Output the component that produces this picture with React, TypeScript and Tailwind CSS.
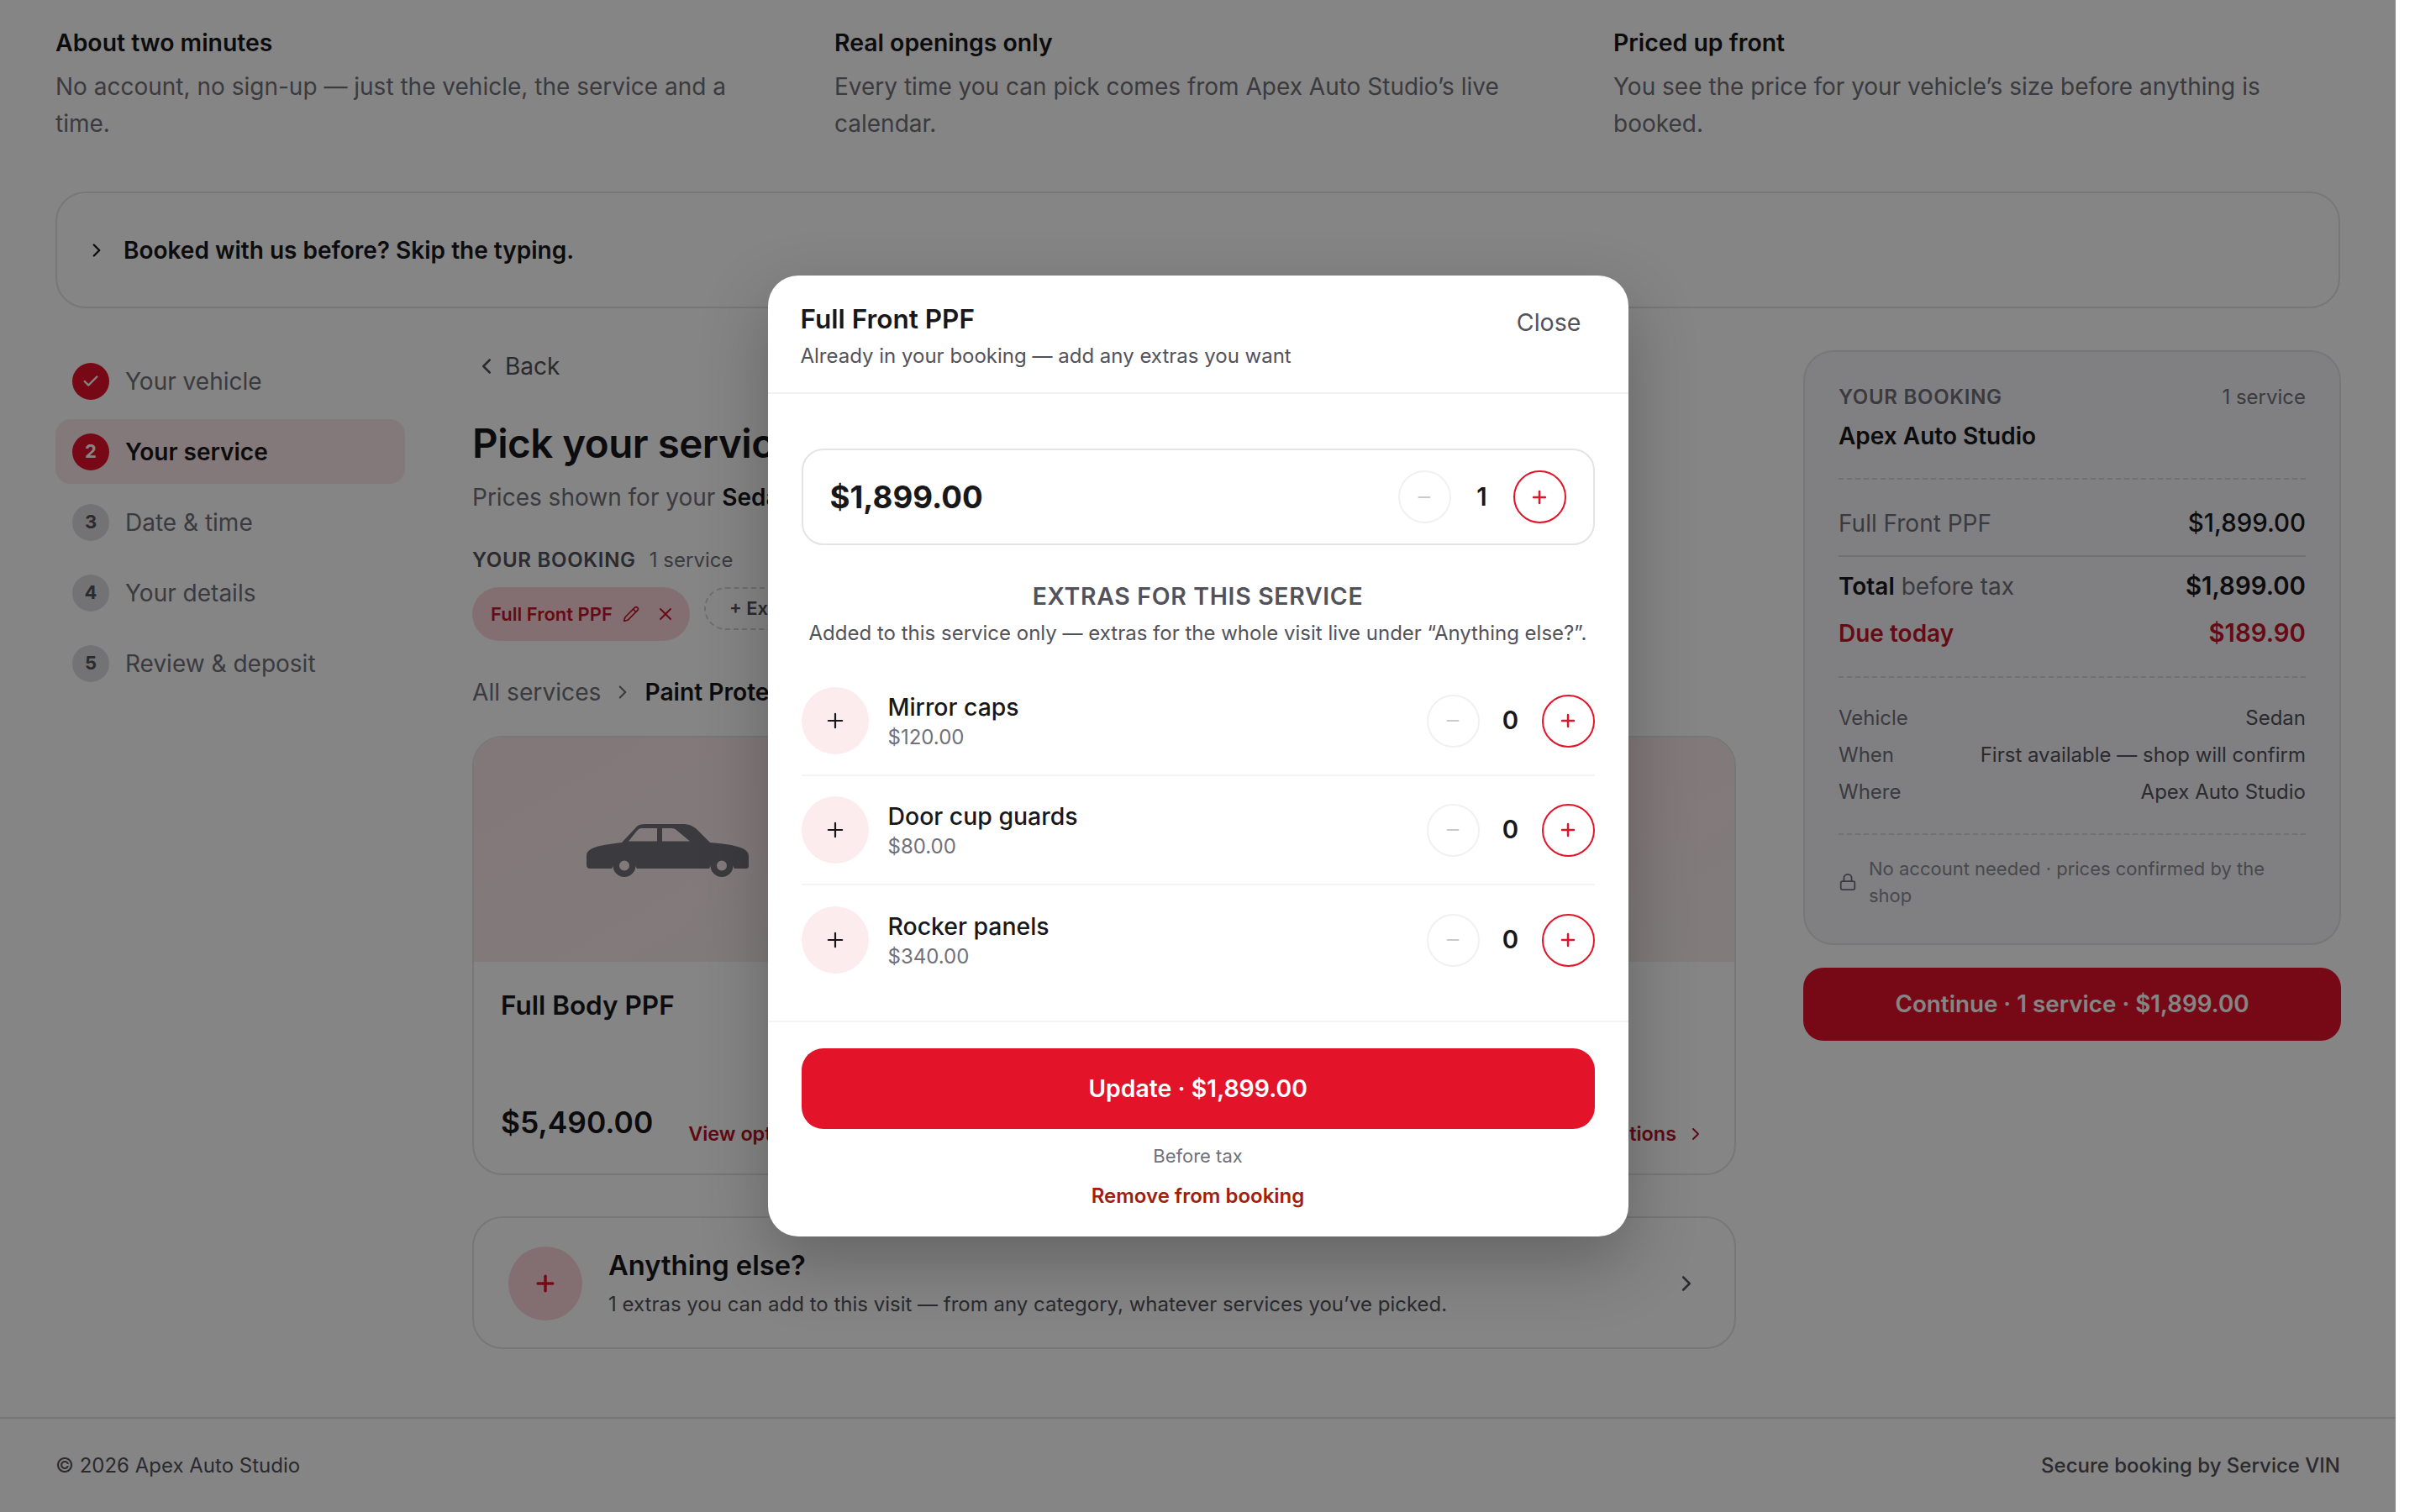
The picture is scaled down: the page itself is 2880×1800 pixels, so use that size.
import { Check, ChevronLeft, ChevronRight, Lock, Minus, Pencil, Plus, X } from 'lucide-react';

const intro = [
  {
    title: 'About two minutes',
    body: 'No account, no sign-up — just the vehicle, the service and a time.',
  },
  {
    title: 'Real openings only',
    body: 'Every time you can pick comes from Apex Auto Studio’s live calendar.',
  },
  {
    title: 'Priced up front',
    body: 'You see the price for your vehicle’s size before anything is booked.',
  },
];

const steps = ['Date & time', 'Your details', 'Review & deposit'];

const cards = [
  { name: 'Full Body PPF', price: '$5,490.00' },
  { name: 'Full Front PPF', price: '$1,899.00' },
  { name: 'Track Pack PPF', price: '$2,750.00' },
];

const extras = [
  { name: 'Mirror caps', price: '$120.00' },
  { name: 'Door cup guards', price: '$80.00' },
  { name: 'Rocker panels', price: '$340.00' },
];

const CarIcon = () => (
  <svg viewBox="0 0 193 64" className="h-[64px] w-[193px] fill-[#71717a]">
    <path
      fillRule="evenodd"
      d="M4 54 C1 54 0 52 0 50 L0 38 C0 32 8 29 16 27 C24 25 34 24 42 23 L58 6 C61 2 65 1 70 1 L114 1 C122 1 126 3 131 7 L147 23 C158 24 170 25 180 28 C188 30 193 34 193 39 L193 51 C193 53 192 54 190 54 L176 54 A16 16 0 0 0 146 54 L60 54 A16 16 0 0 0 30 54 Z M50 21.5 L84 21.5 L84 6 L66 6 C63 6 62 7 60 9 Z M90 21.5 L123 21.5 L108 9 C106 7 104 6 101 6 L90 6 Z"
    />
    <path
      fillRule="evenodd"
      d="M45 37 A13.5 13.5 0 1 0 45 64 A13.5 13.5 0 1 0 45 37 Z M45 44.5 A6 6 0 1 1 45 56.5 A6 6 0 1 1 45 44.5 Z M161 37 A13.5 13.5 0 1 0 161 64 A13.5 13.5 0 1 0 161 37 Z M161 44.5 A6 6 0 1 1 161 56.5 A6 6 0 1 1 161 44.5 Z"
    />
  </svg>
);

const Stepper = ({ value }: { value: number }) => (
  <div className="flex items-center">
    <div className="flex h-[63px] w-[63px] items-center justify-center rounded-full border-2 border-[#f1f1f3] text-[#c9c9ce]">
      <Minus size={22} strokeWidth={2.4} />
    </div>
    <div className="w-[74px] text-center text-[29.4px] font-semibold leading-none text-[#18181b]">{value}</div>
    <div className="flex h-[63px] w-[63px] items-center justify-center rounded-full border-2 border-[#e31329] text-[#e31329]">
      <Plus size={24} strokeWidth={2.4} />
    </div>
  </div>
);

const ServiceCard = ({ name, price }: { name: string; price: string }) => (
  <div className="flex h-[523px] flex-col overflow-hidden rounded-[36px] border-2 border-[#e4e4e7]">
    <div className="flex h-[267px] items-center justify-center bg-linear-to-br from-[#fce6e8] to-[#f7eced] pr-[10px]">
      <CarIcon />
    </div>
    <div className="flex flex-1 flex-col pr-[34px] pl-[32px]">
      <div className="mt-[30px] text-[31.5px] font-semibold leading-[44px] text-[#18181b]">{name}</div>
      <div className="mt-auto mb-[27px] flex items-start justify-between">
        <div className="text-[35.4px] font-semibold leading-[48px] text-[#18181b]">{price}</div>
        <div className="flex items-center gap-[11px] pt-[17px] text-[23.4px] font-semibold leading-[40px] text-[#b81324]">
          View options
          <ChevronRight size={24} />
        </div>
      </div>
    </div>
  </div>
);

const BookingPanel = () => (
  <div className="mt-[1px] w-[640px] shrink-0">
    <div className="rounded-[36px] border-2 border-[#e4e4e7] bg-[#f5f6f9] px-[40px] pt-[36px] pb-[41px]">
      <div className="flex items-center justify-between text-[24px] leading-[36px] text-[#71717a]">
        <span className="font-semibold tracking-[0.7px]">YOUR BOOKING</span>
        <span>1 service</span>
      </div>
      <div className="mt-[6px] text-[28px] font-semibold leading-[44px] text-[#18181b]">Apex Auto Studio</div>
      <div className="mt-[28px] border-t-2 border-dashed border-[#d9d9de]" />
      <div className="mt-[30px] flex items-center justify-between text-[28px] leading-[44px]">
        <span className="text-[#71717a]">Full Front PPF</span>
        <span className="text-[29.4px] font-medium text-[#18181b]">$1,899.00</span>
      </div>
      <div className="mt-[16px] border-t-2 border-[#d9d9de]" />
      <div className="mt-[13px] flex items-center justify-between text-[28px] leading-[44px]">
        <span className="text-[#71717a]">
          <b className="font-semibold text-[#18181b]">Total</b> before tax
        </span>
        <span className="text-[29.4px] font-semibold text-[#18181b]">$1,899.00</span>
      </div>
      <div className="mt-[12px] flex items-center justify-between text-[28px] font-semibold leading-[44px] text-[#c4142a]">
        <span>Due today</span>
        <span className="text-[29.4px]">$189.90</span>
      </div>
      <div className="mt-[29px] border-t-2 border-dashed border-[#d9d9de]" />
      <div className="mt-[28px] flex flex-col gap-[4px] text-[24px] leading-[40px]">
        <div className="flex justify-between">
          <span className="text-[#71717a]">Vehicle</span>
          <span className="text-[#52525b]">Sedan</span>
        </div>
        <div className="flex justify-between">
          <span className="text-[#71717a]">When</span>
          <span className="text-[#52525b]">First available — shop will confirm</span>
        </div>
        <div className="flex justify-between">
          <span className="text-[#71717a]">Where</span>
          <span className="text-[#52525b]">Apex Auto Studio</span>
        </div>
      </div>
      <div className="mt-[29px] border-t-2 border-dashed border-[#d9d9de]" />
      <div className="mt-[24px] flex items-center gap-[14px] pr-[40px] text-[22px] leading-[32px] text-[#8b8b94]">
        <Lock size={22} className="shrink-0 text-[#71717a]" />
        <span>No account needed · prices confirmed by the shop</span>
      </div>
    </div>
    <div className="mt-[27px] flex h-[87px] items-center justify-center rounded-[24px] bg-[#e31329] text-[27.8px] font-semibold text-white">
      Continue · 1 service · $1,899.00
    </div>
  </div>
);

const ExtrasModal = () => (
  <div className="absolute top-0 left-0 flex h-[1800px] w-[2851px] items-center justify-center bg-black/48">
    <div className="flex h-[1144px] w-[1024px] flex-col rounded-[36px] bg-white shadow-[0_30px_80px_rgba(0,0,0,0.25)]">
      <div className="flex h-[141px] shrink-0 justify-between border-b-2 border-[#f1f1f3] pt-[32px] pr-[56px] pl-[39px]">
        <div>
          <div className="text-[31.5px] font-semibold leading-[40px] text-[#18181b]">Full Front PPF</div>
          <div className="mt-[6px] text-[24px] leading-[36px] text-[#52525b]">
            Already in your booking — add any extras you want
          </div>
        </div>
        <div className="pt-[4px] text-[28.6px] leading-[40px] text-[#52525b]">Close</div>
      </div>
      <div className="flex-1 px-[40px] pt-[65px]">
        <div className="flex h-[115px] items-center justify-between rounded-[26px] border-2 border-[#e4e4e7] pr-[32px] pl-[32px]">
          <div className="text-[36.7px] font-bold text-[#18181b]">$1,899.00</div>
          <Stepper value={1} />
        </div>
        <div className="mt-[41px] text-center text-[28.4px] font-semibold leading-[40px] tracking-[0.7px] text-[#52525b]">
          EXTRAS FOR THIS SERVICE
        </div>
        <div className="mt-[6px] text-center text-[24px] leading-[36px] whitespace-nowrap text-[#52525b]">
          Added to this service only — extras for the whole visit live under “Anything else?”.
        </div>
        <div className="mt-[22px]">
          {extras.map((extra, index) => (
            <div
              key={extra.name}
              className={`flex h-[130px] items-center justify-between ${index < extras.length - 1 ? 'border-b-2 border-[#f4f4f5]' : ''}`}
            >
              <div className="flex items-center gap-[23px]">
                <div className="flex h-[80px] w-[80px] items-center justify-center rounded-full bg-[#fdecee] text-[#18181b]">
                  <Plus size={28} strokeWidth={1.9} />
                </div>
                <div>
                  <div className="text-[28.4px] font-medium leading-[40px] text-[#18181b]">{extra.name}</div>
                  <div className="text-[24px] leading-[32px] text-[#71717a]">{extra.price}</div>
                </div>
              </div>
              <Stepper value={0} />
            </div>
          ))}
        </div>
      </div>
      <div className="h-[257px] shrink-0 border-t-2 border-[#f4f4f5] px-[40px] pt-[31px] text-center">
        <div className="flex h-[96px] items-center justify-center rounded-[26px] bg-[#e31329] text-[28.4px] font-semibold text-white">
          Update · $1,899.00
        </div>
        <div className="mt-[14px] text-[22px] leading-[36px] text-[#71717a]">Before tax</div>
        <div className="mt-[12px] text-[24px] font-semibold leading-[36px] text-[#a11d0c]">Remove from booking</div>
      </div>
    </div>
  </div>
);

export default function App() {
  return (
    <div className="relative h-[1800px] w-[2880px] overflow-hidden bg-white font-[Inter,sans-serif]">
      <div className="flex h-full w-[2851px] flex-col">
        <div className="px-[66px] pt-[29px]">
          <div className="grid grid-cols-3 gap-[62px]">
            {intro.map((item) => (
              <div key={item.title}>
                <div className="text-[28.4px] font-semibold leading-[44px] text-[#18181b]">{item.title}</div>
                <div className="mt-[8px] text-[28px] leading-[44px] text-[#71717a]">{item.body}</div>
              </div>
            ))}
          </div>
          <div className="mt-[59px] flex h-[139px] items-center gap-[19px] rounded-[36px] border-2 border-[#e4e4e7] pl-[34px]">
            <ChevronRight size={26} strokeWidth={2.2} className="text-[#18181b]" />
            <span className="text-[28px] font-semibold text-[#18181b]">Booked with us before? Skip the typing.</span>
          </div>
          <div className="mt-[49px] flex gap-[80px]">
            <div className="-mt-[1px] flex w-[416px] shrink-0 flex-col gap-[7px] text-[28px]">
              <div className="flex h-[77px] items-center gap-[19px] px-[20px] text-[#71717a]">
                <div className="flex h-[44px] w-[44px] items-center justify-center rounded-full bg-[#e31329] text-white">
                  <Check size={22} strokeWidth={2.5} />
                </div>
                Your vehicle
              </div>
              <div className="flex h-[77px] items-center gap-[19px] rounded-[18px] bg-[#fde8ea] px-[20px] font-semibold text-[#18181b]">
                <div className="flex h-[44px] w-[44px] items-center justify-center rounded-full bg-[#e31329] text-[22px] font-bold text-white">
                  2
                </div>
                Your service
              </div>
              {steps.map((step, index) => (
                <div key={step} className="flex h-[77px] items-center gap-[19px] px-[20px] text-[#71717a]">
                  <div className="flex h-[44px] w-[44px] items-center justify-center rounded-full bg-[#dcdce0] text-[22px] font-bold text-[#52525b]">
                    {index + 3}
                  </div>
                  {step}
                </div>
              ))}
            </div>
            <div className="w-[1504px] shrink-0">
              <div className="flex h-[40px] items-center gap-[7px] pl-[2px] text-[28px] text-[#52525b]">
                <ChevronLeft size={30} />
                Back
              </div>
              <div className="mt-[40px] text-[47.5px] font-semibold leading-[64px] tracking-[-0.5px] text-[#18181b]">
                Pick your service
              </div>
              <div className="mt-[10px] text-[28px] leading-[44px] text-[#71717a]">
                Prices shown for your <b className="font-semibold text-[#18181b]">Sedan</b>
              </div>
              <div className="mt-[33px] flex h-[40px] items-center gap-[16px] text-[24px]">
                <span className="font-semibold tracking-[0.7px] text-[#52525b]">YOUR BOOKING</span>
                <span className="text-[#71717a]">1 service</span>
              </div>
              <div className="mt-[12px] flex h-[65px] items-start gap-[17px]">
                <div className="flex h-[64px] items-center gap-[12px] rounded-full bg-[#fbd5d9] pr-[17px] pl-[22px] text-[22px] font-semibold text-[#c4142a]">
                  Full Front PPF
                  <Pencil size={20} />
                  <X size={24} className="ml-[7px]" />
                </div>
                <div className="flex h-[51px] items-center gap-[8px] rounded-full border-2 border-dashed border-[#d4d4d8] px-[28px] text-[22px] font-semibold text-[#52525b]">
                  + Extras
                </div>
              </div>
              <div className="mt-[38px] flex h-[44px] items-center gap-[13px] text-[28.2px]">
                <span className="text-[#71717a]">All services</span>
                <ChevronRight size={26} className="text-[#71717a]" />
                <span className="font-semibold text-[#18181b]">Paint Protection</span>
              </div>
              <div className="mt-[30px] grid grid-cols-3 gap-[39.5px]">
                {cards.map((card) => (
                  <ServiceCard key={card.name} {...card} />
                ))}
              </div>
              <div className="mt-[49px] flex h-[158px] items-center rounded-[36px] border-2 border-[#e4e4e7] pt-[2px] pr-[42px] pl-[41px]">
                <div className="flex h-[88px] w-[88px] shrink-0 items-center justify-center rounded-full bg-[#fbd5d9] text-[#e31329]">
                  <Plus size={30} strokeWidth={2.8} />
                </div>
                <div className="ml-[31px] flex-1">
                  <div className="text-[32.7px] font-semibold leading-[44px] text-[#18181b]">Anything else?</div>
                  <div className="mt-[5px] text-[24px] leading-[40px] text-[#52525b]">
                    1 extras you can add to this visit — from any category, whatever services you’ve picked.
                  </div>
                </div>
                <ChevronRight size={30} className="text-[#52525b]" />
              </div>
            </div>
            <BookingPanel />
          </div>
        </div>
        <div className="mt-auto flex h-[113px] shrink-0 items-center justify-between border-t-2 border-[#e4e4e7] px-[66px] text-[24px] text-[#52525b]">
          <span>© 2026 Apex Auto Studio</span>
          <span className="font-medium">Secure booking by Service VIN</span>
        </div>
      </div>
      <ExtrasModal />
    </div>
  );
}
